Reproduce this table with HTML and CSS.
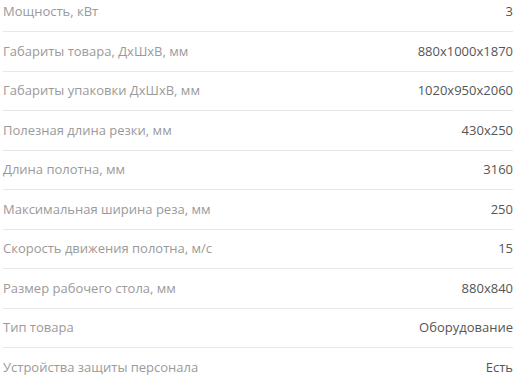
FILE: index.html
```html
<!DOCTYPE html>
<html lang="ru">
<head>
<meta charset="utf-8">
<title>Характеристики</title>
<link rel="stylesheet" href="styles.css">
</head>
<body>
<ul class="specs">
  <li class="spec"><span class="spec-name">Мощность, кВт</span><span class="spec-value">3</span></li>
  <li class="spec"><span class="spec-name">Габариты товара, ДхШхВ, мм</span><span class="spec-value">880x1000x1870</span></li>
  <li class="spec"><span class="spec-name">Габариты упаковки ДхШхВ, мм</span><span class="spec-value">1020x950x2060</span></li>
  <li class="spec"><span class="spec-name">Полезная длина резки, мм</span><span class="spec-value">430x250</span></li>
  <li class="spec"><span class="spec-name">Длина полотна, мм</span><span class="spec-value">3160</span></li>
  <li class="spec"><span class="spec-name">Максимальная ширина реза, мм</span><span class="spec-value">250</span></li>
  <li class="spec"><span class="spec-name">Скорость движения полотна, м/с</span><span class="spec-value">15</span></li>
  <li class="spec"><span class="spec-name">Размер рабочего стола, мм</span><span class="spec-value">880x840</span></li>
  <li class="spec"><span class="spec-name">Тип товара</span><span class="spec-value">Оборудование</span></li>
  <li class="spec"><span class="spec-name">Устройства защиты персонала</span><span class="spec-value">Есть</span></li>
</ul>
</body>
</html>
```
FILE: styles.css
```css
html, body {
  margin: 0;
  padding: 0;
  background: #ffffff;
}

body {
  font-family: "Open Sans", "Liberation Sans", Arial, sans-serif;
  font-size: 13px;
  line-height: 19.5px;
  overflow: hidden;
}

.specs {
  list-style: none;
  margin: -7.5px 9px 0 3px;
  padding: 0;
}

.spec {
  display: flex;
  justify-content: space-between;
  align-items: baseline;
  padding: 9.5px 0 9.5px;
  border-bottom: 1px solid #e8e8e8;
}

.spec:last-child {
  border-bottom: none;
}

.spec-name {
  color: #9a9a9a;
}

.spec-value {
  color: #555555;
  text-align: right;
}
```
